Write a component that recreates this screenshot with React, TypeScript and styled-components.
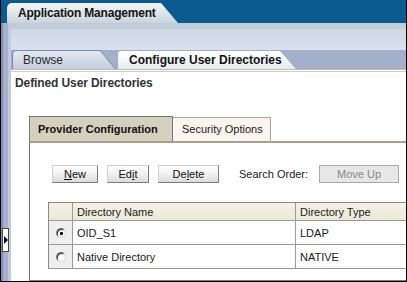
import { Fragment } from "react";
import styled, { createGlobalStyle } from "styled-components";

const GlobalStyle = createGlobalStyle`
  html, body {
    margin: 0;
    padding: 0;
    background: #ffffff;
  }
  body {
    font-family: "Liberation Sans", Arial, sans-serif;
    font-size: 11px;
    color: #1a1a1a;
  }
`;

interface Row {
  name: string;
  type: string;
  selected: boolean;
}

const rows: Row[] = [
  { name: "OID_S1", type: "LDAP", selected: true },
  { name: "Native Directory", type: "NATIVE", selected: false },
];

const App = () => {
  return (
    <>
      <GlobalStyle />
      <Frame>
        <TopBar>
          <AppTab>Application Management</AppTab>
        </TopBar>
        <Body>
          <LeftStrip>
            <Handle />
          </LeftStrip>
          <Main>
            <Band />
            <TabRow>
              <PageTab>
                <PageTabFace>Browse</PageTabFace>
              </PageTab>
              <PageTab $active>
                <PageTabFace $active>Configure User Directories</PageTabFace>
              </PageTab>
            </TabRow>
            <Divider />
            <Content>
              <Title>Defined User Directories</Title>
              <Panel>
                <PanelTabs>
                  <PanelTab $active>Provider Configuration</PanelTab>
                  <PanelTab>Security Options</PanelTab>
                </PanelTabs>
                <PanelBody>
                  <ButtonRow>
                    <Button $w={46}>
                      <u>N</u>ew
                    </Button>
                    <Button $w={42}>
                      Ed<u>i</u>t
                    </Button>
                    <Button $w={61}>
                      De<u>l</u>ete
                    </Button>
                    <Label>Search Order:</Label>
                    <Button $w={80} disabled>
                      Move Up
                    </Button>
                  </ButtonRow>
                  <Grid>
                    <HeadCell />
                    <HeadCell>Directory Name</HeadCell>
                    <HeadCell>Directory Type</HeadCell>
                    {rows.map((r) => (
                      <Fragment key={r.name}>
                        <SelectCell>
                          <Radio $checked={r.selected} />
                        </SelectCell>
                        <Cell>{r.name}</Cell>
                        <Cell>{r.type}</Cell>
                      </Fragment>
                    ))}
                  </Grid>
                </PanelBody>
              </Panel>
            </Content>
          </Main>
        </Body>
      </Frame>
    </>
  );
};

const Frame = styled.div`
  width: 407px;
  height: 282px;
  box-sizing: border-box;
  border: 1px solid #000;
  border-top: none;
  display: flex;
  flex-direction: column;
  overflow: hidden;
`;

const TopBar = styled.div`
  height: 23px;
  flex-shrink: 0;
  background: #0b5a90;
  padding-left: 6px;
  box-sizing: border-box;
  display: flex;
  align-items: flex-end;
`;

const AppTab = styled.div`
  width: 171px;
  height: 20px;
  box-sizing: border-box;
  padding-left: 11px;
  line-height: 21px;
  font-size: 12px;
  font-weight: bold;
  letter-spacing: -0.2px;
  color: #141414;
  white-space: nowrap;
  border-top-left-radius: 5px;
  background: linear-gradient(#f3f6f8, #dfe7ec 50%, #c7d3dc);
  clip-path: polygon(0 0, 154px 0, 171px 100%, 0 100%);
`;

const Body = styled.div`
  flex: 1;
  display: flex;
  min-height: 0;
`;

const LeftStrip = styled.div`
  width: 10px;
  flex-shrink: 0;
  position: relative;
  background: linear-gradient(
    to right,
    #7e8db0 0 2px,
    #a6b2cd 2px 7px,
    #c2cadd 7px 10px
  );
`;

const Handle = styled.div`
  position: absolute;
  left: 1px;
  top: 205px;
  width: 7px;
  height: 24px;
  box-sizing: border-box;
  background: #fff;
  border: 1px solid #4a4a4a;
  &::after {
    content: "";
    position: absolute;
    left: 1px;
    top: 7px;
    border-left: 4px solid #000;
    border-top: 4px solid transparent;
    border-bottom: 4px solid transparent;
  }
`;

const Main = styled.div`
  flex: 1;
  display: flex;
  flex-direction: column;
  min-width: 0;
`;

const Band = styled.div`
  height: 27px;
  flex-shrink: 0;
  background: linear-gradient(
    #bfcad9 0,
    #c4cfdc 6px,
    #d0dae6 7px,
    #d8e2ee 100%
  );
`;

const TabRow = styled.div`
  height: 19px;
  flex-shrink: 0;
  background: #a3b0cb;
  padding-left: 1px;
  display: flex;
  align-items: flex-end;
`;

const PageTab = styled.div<{ $active?: boolean }>`
  width: ${(p) => (p.$active ? 180 : 104)}px;
  height: 19px;
  margin-left: ${(p) => (p.$active ? 1 : 0)}px;
  box-sizing: border-box;
  padding: 1px 1px 0 1px;
  background: ${(p) => (p.$active ? "#a4b1c9" : "#7a8aab")};
  border-top-left-radius: 4px;
  clip-path: ${(p) =>
    p.$active
      ? "polygon(0 0, 163px 0, 180px 100%, 0 100%)"
      : "polygon(0 0, 88px 0, 104px 100%, 0 100%)"};
`;

const PageTabFace = styled.div<{ $active?: boolean }>`
  height: 100%;
  box-sizing: border-box;
  padding-left: ${(p) => (p.$active ? 11 : 10)}px;
  line-height: 18px;
  font-size: 12px;
  font-weight: ${(p) => (p.$active ? "bold" : "normal")};
  color: ${(p) => (p.$active ? "#111" : "#2a2a2a")};
  white-space: nowrap;
  border-top-left-radius: 3px;
  background: ${(p) =>
    p.$active
      ? "linear-gradient(#ffffff, #f4f7fa 50%, #e2e9f2)"
      : "linear-gradient(#e3e9f2, #d3dbe8 50%, #c3cde0)"};
  clip-path: ${(p) =>
    p.$active
      ? "polygon(0 0, 162px 0, 178px 100%, 0 100%)"
      : "polygon(0 0, 87px 0, 102px 100%, 0 100%)"};
`;

const Divider = styled.div`
  height: 3px;
  flex-shrink: 0;
  background: linear-gradient(#c7bd9d 0 1px, #ffffff 1px 2px, #cdcdcd 2px 3px);
`;

const Content = styled.div`
  flex: 1;
  min-height: 0;
  background: #fff;
  padding: 4px 0 0 4px;
  display: flex;
  flex-direction: column;
  overflow: hidden;
`;

const Title = styled.div`
  font-size: 12px;
  font-weight: bold;
  line-height: 14px;
  color: #333;
  letter-spacing: -0.1px;
`;

const Panel = styled.div`
  margin: 26px 0 0 14px;
  width: 400px;
  flex: 1;
  display: flex;
  flex-direction: column;
`;

const PanelTabs = styled.div`
  height: 25px;
  display: flex;
  align-items: flex-end;
`;

const PanelTab = styled.div<{ $active?: boolean }>`
  box-sizing: border-box;
  width: ${(p) => (p.$active ? 144 : 98)}px;
  height: ${(p) => (p.$active ? 25 : 24)}px;
  padding-left: ${(p) => (p.$active ? 8 : 9)}px;
  line-height: ${(p) => (p.$active ? 24 : 23)}px;
  font-weight: ${(p) => (p.$active ? "bold" : "normal")};
  color: ${(p) => (p.$active ? "#111" : "#222")};
  white-space: nowrap;
  background: ${(p) => (p.$active ? "#d5cfbe" : "#fbf5ee")};
  border: 1px solid ${(p) => (p.$active ? "#767676" : "#aea698")};
  border-bottom: none;
  border-left: ${(p) => (p.$active ? "1px solid #767676" : "none")};
`;

const PanelBody = styled.div`
  flex: 1;
  border-left: 1px solid #767676;
  border-top: 2px solid #a8a08a;
  border-bottom: 1px solid #7a7a7a;
  padding: 22px 0 0 18px;
`;

const ButtonRow = styled.div`
  display: flex;
  align-items: center;
  gap: 9px;
  height: 18px;
  margin-left: 4px;
`;

const Button = styled.button<{ $w: number }>`
  width: ${(p) => p.$w}px;
  height: 18px;
  padding: 0;
  box-sizing: border-box;
  font-family: inherit;
  font-size: 11px;
  color: #111;
  background: linear-gradient(#ffffff, #f3f3f3 45%, #dcdcdc);
  border: 1px solid;
  border-color: #cfcfcf #7c7c7c #7c7c7c #cfcfcf;
  u {
    text-underline-offset: 1px;
  }
  &:disabled {
    color: #888;
    background: #e7e7e7;
    border-color: #a9a9a9;
  }
`;

const Label = styled.span`
  width: 71px;
  margin-left: 11px;
  color: #222;
  white-space: nowrap;
`;

const Grid = styled.div`
  margin-top: 19px;
  width: 380px;
  display: grid;
  grid-template-columns: 24px 223px 1fr;
  grid-template-rows: 18px 24px 24px;
  border-left: 1px solid #8a8a8a;
  border-top: 1px solid #8a8a8a;
`;

const Cell = styled.div`
  border-right: 1px solid #9a9a9a;
  border-bottom: 1px solid #9a9a9a;
  padding-left: 4px;
  display: flex;
  align-items: center;
  color: #1a1a1a;
  white-space: nowrap;
`;

const HeadCell = styled(Cell)`
  background: linear-gradient(#f4f2e6, #ebe8d6);
  color: #222;
`;

const SelectCell = styled(Cell)`
  padding: 0;
  justify-content: center;
  background: #efefef;
`;

const Radio = styled.span<{ $checked: boolean }>`
  position: relative;
  width: 10px;
  height: 10px;
  box-sizing: border-box;
  border-radius: 50%;
  background: #fff;
  border: 1px solid;
  border-color: #6e6e6e #d8d8d8 #d8d8d8 #6e6e6e;
  box-shadow: inset 1px 1px 0 #3a3a3a;
  &::after {
    content: "";
    display: ${(p) => (p.$checked ? "block" : "none")};
    position: absolute;
    left: 3px;
    top: 3px;
    width: 3px;
    height: 3px;
    border-radius: 1px;
    background: #000;
  }
`;

export default App;
